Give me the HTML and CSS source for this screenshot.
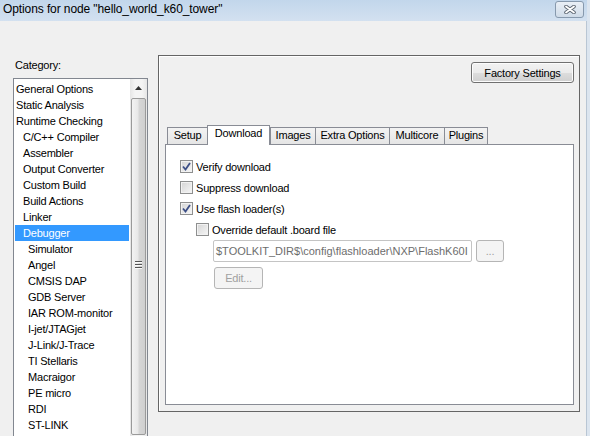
FILE: index.html
```html
<!DOCTYPE html>
<html lang="en">
<head>
    <meta charset="UTF-8">
    <title>Options for node "hello_world_k60_tower"</title>
    <link rel="stylesheet" href="styles.css">
</head>
<body>
    <div class="window">
        <div class="titlebar">
            <span class="title">Options for node "hello_world_k60_tower"</span>
            <div class="close">
                <svg width="12" height="9" viewBox="0 0 12 9">
                    <path d="M2 1.5 L10 7.5 M10 1.5 L2 7.5" stroke="#5b6470" stroke-width="3.6" stroke-linecap="round"/>
                    <path d="M2 1.5 L10 7.5 M10 1.5 L2 7.5" stroke="#ffffff" stroke-width="1.8" stroke-linecap="round"/>
                </svg>
            </div>
        </div>

        <div class="content">
            <!-- Lista de categorias -->
            <div class="category">
                <div class="label">Category:</div>
                <div class="listbox">
                    <ul class="items">
                        <li>General Options</li>
                        <li>Static Analysis</li>
                        <li>Runtime Checking</li>
                        <li class="sub">C/C++ Compiler</li>
                        <li class="sub">Assembler</li>
                        <li class="sub">Output Converter</li>
                        <li class="sub">Custom Build</li>
                        <li class="sub">Build Actions</li>
                        <li class="sub">Linker</li>
                        <li class="sub selected">Debugger</li>
                        <li class="subsub">Simulator</li>
                        <li class="subsub">Angel</li>
                        <li class="subsub">CMSIS DAP</li>
                        <li class="subsub">GDB Server</li>
                        <li class="subsub">IAR ROM-monitor</li>
                        <li class="subsub">I-jet/JTAGjet</li>
                        <li class="subsub">J-Link/J-Trace</li>
                        <li class="subsub">TI Stellaris</li>
                        <li class="subsub">Macraigor</li>
                        <li class="subsub">PE micro</li>
                        <li class="subsub">RDI</li>
                        <li class="subsub">ST-LINK</li>
                    </ul>
                    <div class="scrollbar">
                        <div class="arrow">
                            <svg width="7" height="4" viewBox="0 0 7 4"><path d="M0 4 L3.5 0 L7 4 Z" fill="#333"/></svg>
                        </div>
                        <div class="thumb">
                            <div class="grip"><span></span><span></span><span></span></div>
                        </div>
                    </div>
                </div>
            </div>

            <!-- Panel de opciones -->
            <div class="group">
                <div class="group-top">
                    <button class="btn factory">Factory Settings</button>
                </div>

                <div class="tabs">
                    <div class="tab w-setup">Setup</div>
                    <div class="tab w-download selected">Download</div>
                    <div class="tab w-images">Images</div>
                    <div class="tab w-extra">Extra Options</div>
                    <div class="tab w-multi">Multicore</div>
                    <div class="tab w-plugins">Plugins</div>
                </div>

                <div class="pane">
                    <div class="row">
                        <span class="check on"><svg width="11" height="11" viewBox="0 0 11 11"><path d="M2 5.5 L4.5 8.5 L9 2" fill="none" stroke="#3d4f86" stroke-width="1.8"/></svg></span>
                        Verify download
                    </div>
                    <div class="row">
                        <span class="check"></span>
                        Suppress download
                    </div>
                    <div class="row">
                        <span class="check on"><svg width="11" height="11" viewBox="0 0 11 11"><path d="M2 5.5 L4.5 8.5 L9 2" fill="none" stroke="#3d4f86" stroke-width="1.8"/></svg></span>
                        Use flash loader(s)
                    </div>
                    <div class="row indent">
                        <span class="check"></span>
                        Override default .board file
                    </div>
                    <div class="file-row">
                        <div class="input">$TOOLKIT_DIR$\config\flashloader\NXP\FlashK60I</div>
                        <button class="btn small browse" disabled>...</button>
                    </div>
                    <button class="btn small edit" disabled>Edit...</button>
                </div>
            </div>
        </div>
    </div>
</body>
</html>
```

FILE: styles.css
```css
/* Estilos generales */
html, body {
    margin: 0;
    padding: 0;
}

body {
    font-family: "Liberation Sans", Arial, sans-serif;
    font-size: 11px;
    letter-spacing: -0.2px;
    color: #000;
    background: #f0f0f0;
}

.window {
    width: 590px;
    height: 436px;
    overflow: hidden;
    background: #f0f0f0;
    box-sizing: border-box;
    border-right: 3px solid #dce5ef;
    box-shadow: inset -1px 0 0 #b9c6d4;
}

/* Barra de titulo */
.titlebar {
    height: 21px;
    display: flex;
    align-items: flex-start;
    justify-content: space-between;
    background: linear-gradient(#c2d6eb, #d3e1f0);
}

.title {
    font-size: 12px;
    letter-spacing: -0.1px;
    line-height: 19px;
    padding-left: 3px;
    color: #000;
}

.close {
    width: 27px;
    height: 15px;
    margin-top: 1px;
    margin-right: 3px;
    border: 1px solid #8799ad;
    border-radius: 3px;
    background: linear-gradient(#e9eff6, #cfdbe8);
    display: flex;
    align-items: center;
    justify-content: center;
}

.content {
    display: flex;
}

/* Lista de categorias */
.category {
    padding-left: 13px;
}

.label {
    margin-top: 37px;
    line-height: 14px;
    margin-bottom: 6px;
    padding-left: 2px;
}

.listbox {
    width: 135px;
    height: 374px;
    box-sizing: border-box;
    border: 1px solid #828790;
    background: #fff;
    display: flex;
}

.items {
    list-style: none;
    margin: 2px 0 0 1px;
    padding: 0;
    width: 115px;
}

.items li {
    height: 16px;
    line-height: 16px;
    padding-left: 1px;
    white-space: nowrap;
    overflow: hidden;
}

.items li.sub { padding-left: 8px; }
.items li.subsub { padding-left: 13px; }

.items li.selected {
    background: #3399ff;
    color: #fff;
}

.scrollbar {
    width: 17px;
    margin-left: 1px;
    background: linear-gradient(90deg, #e6e6e6, #f4f4f4 30%, #f4f4f4 70%, #e6e6e6);
    display: flex;
    flex-direction: column;
    align-items: center;
}

.arrow {
    height: 17px;
    width: 17px;
    display: flex;
    align-items: center;
    justify-content: center;
}

.thumb {
    margin-top: 2px;
    width: 13px;
    height: 335px;
    border: 1px solid #9a9a9a;
    border-radius: 2px;
    background: linear-gradient(90deg, #f3f3f3, #e8e8e8 45%, #d6d6d6 55%, #cfcfcf);
    display: flex;
    flex-direction: column;
    align-items: center;
}

.grip {
    margin-top: 162px;
    display: flex;
    flex-direction: column;
    gap: 2px;
}

.grip span {
    display: block;
    width: 7px;
    height: 1px;
    background: #555;
    box-shadow: 0 1px 0 #fafafa;
}

/* Panel de opciones */
.group {
    margin-top: 34px;
    margin-left: 10px;
    width: 422px;
    height: 357px;
    box-sizing: border-box;
    border: 1px solid #656565;
    box-shadow: inset 1px 1px 0 #fff;
    padding: 6px 5px 0 6px;
}

.group-top {
    display: flex;
    justify-content: flex-end;
}

.btn {
    font-family: "Liberation Sans", Arial, sans-serif;
    font-size: 11px;
    letter-spacing: -0.2px;
    color: #000;
    box-sizing: border-box;
    border: 1px solid #707070;
    border-radius: 3px;
    background: linear-gradient(#f2f2f2 0%, #ebebeb 50%, #dddddd 51%, #cfcfcf 100%);
    box-shadow: inset 0 0 0 1px #fcfcfc;
    padding: 0;
}

.factory {
    width: 103px;
    height: 21px;
}

.tabs {
    margin-top: 42px;
    height: 19px;
    display: flex;
    align-items: flex-end;
    padding-left: 2px;
}

.tab {
    box-sizing: border-box;
    height: 17px;
    line-height: 15px;
    text-align: center;
    border: 1px solid #898c95;
    border-bottom: none;
    border-right: none;
    background: linear-gradient(#f3f3f3, #e5e5e5);
}

.tab.w-plugins { border-right: 1px solid #898c95; }

.tab.selected {
    height: 20px;
    margin-bottom: -1px;
    line-height: 15px;
    background: #fff;
    border-right: 1px solid #898c95;
    position: relative;
    z-index: 1;
}

.w-setup { width: 40px; }
.w-download { width: 63px; }
.w-images { width: 45px; }
.w-extra { width: 74px; }
.w-multi { width: 55px; }
.w-plugins { width: 44px; }

.pane {
    height: 261px;
    box-sizing: border-box;
    border: 1px solid #898c95;
    background: #fff;
    padding: 11px 0 0 14px;
}

.row {
    height: 21px;
    display: flex;
    align-items: center;
    gap: 3px;
}

.row.indent {
    margin-left: 16px;
}

.check {
    width: 13px;
    height: 13px;
    box-sizing: border-box;
    border: 1px solid #8e8f8f;
    background: linear-gradient(135deg, #d4d4d4, #f7f7f7);
    box-shadow: inset 0 0 0 1px #f2f2f2;
    display: flex;
    align-items: center;
    justify-content: center;
}

.file-row {
    display: flex;
    margin-left: 33px;
    gap: 4px;
}

.input {
    width: 259px;
    height: 22px;
    box-sizing: border-box;
    border: 1px solid #c4c4c4;
    border-radius: 2px;
    background: #fff;
    color: #6d6d6d;
    line-height: 20px;
    padding-left: 2px;
    letter-spacing: 0;
    white-space: nowrap;
    overflow: hidden;
}

.btn.small {
    height: 22px;
    color: #a0a0a0;
    border-color: #b5b5b5;
    background: #f4f4f4;
    box-shadow: none;
}

.browse { width: 28px; }

.edit {
    width: 49px;
    margin-top: 5px;
    margin-left: 34px;
}
```
